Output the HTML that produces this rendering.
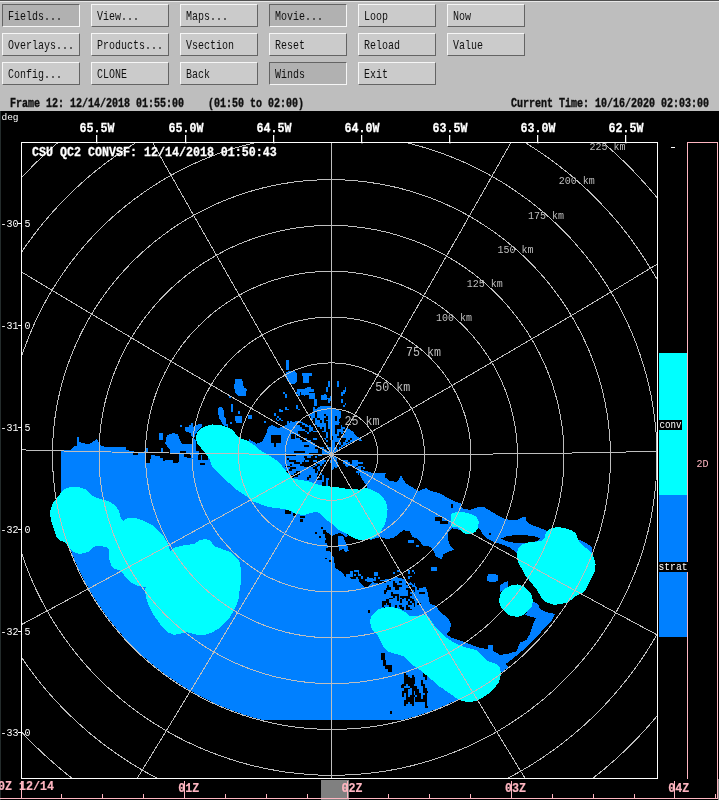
<!DOCTYPE html><html><head><meta charset="utf-8"><title>CIDD</title><style>
html,body{margin:0;padding:0;background:#000;}
body{width:719px;height:800px;overflow:hidden;position:relative;font-family:"Liberation Mono",monospace;}
#top{position:absolute;left:0;top:0;width:719px;height:111px;background:#bebebe;}
#top .l0{position:absolute;left:0;top:0;width:719px;height:1px;background:#505050;}
#top .l1{position:absolute;left:0;top:1px;width:719px;height:1px;background:#e8e8e8;}
.b{position:absolute;width:76px;height:21px;border:1px solid;border-color:#f6f6f6 #646464 #646464 #f6f6f6;background:#cbcbcb;}
.b.p{border-color:#646464 #f6f6f6 #f6f6f6 #646464;background:#b1b1b1;}
.b span{position:absolute;left:5px;top:1px;font-size:10px;line-height:21px;color:#101010;white-space:pre;transform:scaleY(1.36);transform-origin:0 50%;}
.st{position:absolute;top:96px;font-size:10px;font-weight:bold;line-height:16px;color:#101010;-webkit-text-stroke:0.3px #101010;white-space:pre;transform:scaleY(1.36);transform-origin:0 50%;}
svg{position:absolute;left:0;top:0;will-change:transform;}
#top{will-change:transform;}
</style></head><body>
<div id="top"><div class="l0"></div><div class="l1"></div>
<div class="b p" style="left:2px;top:4px"><span>Fields...</span></div>
<div class="b" style="left:2px;top:33px"><span>Overlays...</span></div>
<div class="b" style="left:2px;top:62px"><span>Config...</span></div>
<div class="b" style="left:91px;top:4px"><span>View...</span></div>
<div class="b" style="left:91px;top:33px"><span>Products...</span></div>
<div class="b" style="left:91px;top:62px"><span>CLONE</span></div>
<div class="b" style="left:180px;top:4px"><span>Maps...</span></div>
<div class="b" style="left:180px;top:33px"><span>Vsection</span></div>
<div class="b" style="left:180px;top:62px"><span>Back</span></div>
<div class="b p" style="left:269px;top:4px"><span>Movie...</span></div>
<div class="b" style="left:269px;top:33px"><span>Reset</span></div>
<div class="b p" style="left:269px;top:62px"><span>Winds</span></div>
<div class="b" style="left:358px;top:4px"><span>Loop</span></div>
<div class="b" style="left:358px;top:33px"><span>Reload</span></div>
<div class="b" style="left:358px;top:62px"><span>Exit</span></div>
<div class="b" style="left:447px;top:4px"><span>Now</span></div>
<div class="b" style="left:447px;top:33px"><span>Value</span></div>
<div class="st" style="left:10px">Frame 12: 12/14/2018 01:55:00    (01:50 to 02:00)</div>
<div class="st" style="left:511px">Current Time: 10/16/2020 02:03:00</div>
</div>
<svg width="719" height="800" viewBox="0 0 719 800">
<defs><clipPath id="cp"><rect x="22" y="143" width="635" height="635"/></clipPath></defs>
<rect x="0" y="111" width="1" height="689" fill="#232b2b"/>
<rect x="718" y="779" width="1" height="21" fill="#8a8a8a"/>
<g clip-path="url(#cp)" shape-rendering="crispEdges">
<polygon fill="#0080ff" points="60.5,450.0 71.0,450.0 73.4,446.7 76.7,445.6 77.4,437.4 79.0,437.4 79.6,442.3 84.5,443.4 87.9,444.5 92.3,442.3 96.8,439.0 98.4,442.3 101.2,445.6 106.8,447.2 118.0,447.2 125.7,446.7 125.7,450.0 133.5,451.2 133.5,454.5 138.0,453.4 144.7,451.2 146.9,462.3 150.2,462.3 150.9,454.5 155.8,455.6 161.4,456.7 164.7,460.0 173.6,459.0 179.2,462.3 179.2,453.4 184.8,452.3 193.7,453.4 250.0,453.0 331.5,454.5 324.0,518.0 324.0,530.0 326.0,540.0 329.0,550.0 334.0,558.0 335.0,568.0 342.0,572.0 346.0,578.0 355.0,579.0 360.0,582.0 366.0,589.0 372.0,582.0 380.0,584.0 386.0,579.0 396.0,577.0 404.0,579.0 410.0,581.0 414.0,586.0 420.0,588.0 426.0,587.0 428.0,594.0 430.0,604.0 436.0,606.0 440.0,612.0 448.0,618.0 451.0,624.0 450.0,630.0 446.0,634.0 452.0,638.0 464.0,642.0 472.0,645.0 480.0,648.0 488.0,649.0 488.0,645.0 493.0,645.0 493.0,650.0 496.0,654.0 500.0,660.0 508.6,667.0 504.8,670.0 500.9,672.9 497.0,675.8 493.0,678.6 489.0,681.4 484.9,684.1 480.8,686.7 476.6,689.2 472.4,691.7 468.1,694.1 463.8,696.4 459.5,698.6 455.1,700.8 450.6,702.9 446.2,704.9 441.7,706.8 437.1,708.7 432.6,710.4 428.0,712.1 423.3,713.8 418.7,715.3 414.0,716.7 409.3,718.1 404.5,719.4 399.7,720.0 395.0,720.0 390.2,720.0 385.3,720.0 380.5,720.0 375.6,720.0 370.8,720.0 365.9,720.0 361.0,720.0 356.1,720.0 351.2,720.0 346.2,720.0 341.3,720.0 336.4,720.0 331.5,720.0 326.5,720.0 321.6,720.0 316.7,720.0 311.8,720.0 306.8,720.0 301.9,720.0 297.0,720.0 292.2,720.0 287.3,720.0 282.4,720.0 277.6,720.0 272.8,720.0 268.0,720.0 263.2,720.0 258.4,719.0 253.7,717.7 248.9,716.2 244.3,714.8 239.6,713.2 235.0,711.6 230.4,709.8 225.8,708.0 221.2,706.1 216.7,704.2 212.3,702.1 207.9,700.0 203.5,697.8 199.1,695.6 194.8,693.2 190.5,690.8 186.3,688.3 182.2,685.8 178.0,683.1 173.9,680.4 169.9,677.7 165.9,674.8 162.0,671.9 158.1,668.9 154.3,665.9 150.6,662.8 146.9,659.6 143.2,656.4 139.6,653.1 136.1,649.7 132.6,646.3 129.2,642.8 125.9,639.3 122.6,635.7 119.4,632.1 116.3,628.4 113.2,624.6 110.2,620.8 107.3,616.9 104.4,613.0 101.6,609.1 98.9,605.1 96.2,601.0 93.7,597.0 91.1,592.8 88.7,588.6 86.4,584.4 84.1,580.2 81.9,575.9 79.8,571.5 77.7,567.2 75.8,562.8 73.9,558.4 72.1,553.9 70.3,549.4 68.7,544.9 67.1,540.3 65.6,535.8 64.2,531.2 62.9,526.5 61.7,521.9 60.5,517.2 60.5,512.6 60.5,507.9 60.5,503.1 60.5,498.4 60.5,493.7 60.5,488.9 60.5,484.2 60.5,479.4 60.5,474.6 60.5,469.9 60.5,465.1 60.5,460.3 60.5,455.5 60.5,450.7"/>
<polygon fill="#0080ff" points="358.3,468.3 361.0,469.5 374.5,473.4 385.7,473.4 384.6,477.0 390.0,481.0 397.0,482.0 401.0,475.6 405.7,483.4 413.5,488.0 419.0,491.0 425.8,488.0 430.0,490.8 436.7,492.5 441.7,494.2 448.3,498.3 453.3,500.8 460.8,503.3 461.7,508.3 470.0,510.0 475.0,508.3 480.0,506.7 484.0,506.7 486.7,509.0 493.3,512.5 498.3,515.8 503.3,518.3 510.0,520.0 516.7,520.0 521.7,517.5 525.3,516.7 526.7,521.7 531.7,525.0 540.0,528.0 545.0,530.0 550.0,535.0 530.0,560.0 517.0,553.0 510.0,547.6 502.0,544.4 495.0,542.0 493.3,541.7 488.3,539.2 483.3,535.0 478.7,527.5 470.0,533.0 460.0,530.0 452.5,528.3 448.3,531.7 447.5,538.3 450.0,545.0 454.2,550.0 448.3,551.7 443.3,554.2 441.7,559.2 435.8,556.7 433.3,550.0 430.0,546.7 423.3,545.8 418.0,539.0 412.4,537.0 410.0,531.3 403.5,530.2 399.0,533.5 393.5,538.0 386.8,539.0 381.0,537.0 370.0,540.0 366.7,486.0 363.3,481.0 360.0,475.0"/>
<polygon fill="#0080ff" points="530.0,600.0 538.0,604.0 540.0,609.0 546.0,612.0 555.0,614.0 552.0,620.0 542.7,630.0 535.0,638.8 527.7,646.3 520.0,652.6 512.6,658.9 502.6,666.4 496.0,660.0 492.0,650.0 500.0,655.0 507.6,653.9 516.4,651.4 520.0,642.6 526.4,640.0 530.0,633.8 532.7,625.0 536.0,618.0 528.0,616.0 525.0,615.0 531.0,606.0"/>
<polygon fill="#0080ff" points="248.7,438.9 256.5,443.7 262.3,441.8 266.2,434.0 268.1,427.2 272.0,425.2 277.9,428.1 283.7,426.2 291.5,422.3 299.3,420.4 303.8,423.1 307.5,425.0 310.0,428.1 312.5,432.5 315.0,436.3 317.5,440.0 321.3,445.0 325.0,448.8 330.0,452.5 330.0,451.9 327.5,447.5 325.0,441.3 323.8,436.3 320.0,432.5 317.5,427.5 315.0,423.8 315.0,418.1 310.0,416.3 313.0,412.0 316.2,408.8 320.0,406.2 327.5,406.2 330.0,408.0 337.5,410.0 341.2,411.2 341.2,417.5 338.5,420.0 342.5,426.9 347.5,428.1 352.5,431.2 356.2,435.6 360.4,438.8 362.2,441.5 357.5,440.0 350.0,443.1 343.8,446.2 337.5,450.0 333.0,454.2 335.0,460.0 250.0,460.0"/>
<polygon fill="#0080ff" points="167.6,435.1 173.4,433.1 177.6,434.2 180.1,440.1 181.8,445.1 180.9,449.2 176.8,450.1 170.1,450.1 167.6,446.7 165.4,443.4 165.9,438.4"/>
<polygon fill="#0080ff" points="185.0,427.5 188.8,427.1 189.2,425.4 190.9,425.0 191.3,423.4 193.0,423.4 193.0,426.7 195.0,426.7 195.0,425.0 197.5,424.6 201.7,424.2 201.7,426.7 199.2,429.2 196.7,432.5 195.0,435.0 194.2,438.4 195.9,440.1 195.9,445.9 197.5,445.9 201.7,449.2 203.4,453.4 192.5,453.4 192.5,436.7 191.3,435.9 190.9,433.4 189.2,432.5 186.7,432.1 185.0,430.9"/>
<polygon fill="#0080ff" points="170.0,433.8 177.5,434.2 179.2,438.4 180.9,443.4 192.5,444.2 192.5,451.7 187.1,451.7 187.1,450.9 182.5,450.9 182.5,451.7 170.0,451.7"/>
<polygon fill="#0080ff" points="170.0,451.7 182.5,451.7 182.5,450.9 187.1,450.9 187.1,451.7 192.5,451.7 192.5,453.4 170.0,453.4"/>
<polygon fill="#0080ff" points="217.6,411.3 220.1,410.0 224.3,410.0 224.3,413.3 223.4,415.0 223.4,417.9 225.9,418.3 225.9,424.2 227.6,424.2 227.6,426.7 222.6,425.0 221.8,420.0 219.2,418.3 219.2,413.3 217.6,412.5"/>
<polygon fill="#0080ff" points="286.6,371.7 291.5,370.7 296.4,371.7 297.4,381.4 293.5,384.3 288.6,382.4 285.7,377.5"/>
<polygon fill="#0080ff" points="235.0,379.5 241.9,378.5 243.8,387.3 246.7,389.2 245.8,396.0 238.9,396.0 235.0,392.1 234.1,387.3"/>
<polygon fill="#0080ff" points="218.5,407.7 222.4,406.7 223.4,414.5 225.3,418.4 224.3,424.3 221.4,422.3 219.5,416.5 217.5,412.6"/>
<polygon fill="#0080ff" points="332.0,456.0 337.0,457.0 338.0,466.0 334.0,470.0 332.0,470.0"/>
<polygon fill="#0080ff" points="320.0,510.0 324.0,516.0 332.0,524.0 340.0,530.0 348.0,535.0 346.0,537.0 340.0,532.4 332.0,536.0 324.0,530.0 324.0,522.0 320.0,518.0"/>
<polygon fill="#0080ff" points="338.2,536.3 343.2,536.3 345.0,541.3 347.5,546.3 348.8,551.3 345.0,551.9 343.2,548.8 339.4,550.7 338.2,546.3"/>
<polygon fill="#0080ff" points="577.1,539.1 580.1,540.1 586.1,543.1 592.2,547.1 592.2,552.5 588.2,552.5 584.1,549.1 580.1,545.1 577.7,542.1"/>
<polygon fill="#0080ff" points="488.0,574.5 495.0,573.7 498.4,576.1 497.6,581.1 492.0,582.5 487.6,581.1 487.0,577.1"/>
<polygon fill="#0080ff" points="500.0,585.1 505.0,582.1 508.0,581.1 508.0,586.1 504.0,590.1 500.0,592.1"/>
<polygon fill="#000" points="501.0,538.5 506.0,536.5 512.0,535.5 520.0,535.0 528.0,535.5 535.0,536.5 540.0,538.5 537.0,541.0 531.0,542.5 524.0,543.0 516.0,543.0 510.0,542.0 505.0,540.5"/>
<polygon fill="#000" points="334.5,466.7 343.4,475.6 354.5,481.2 366.7,485.6 366.7,489.4 352.3,487.8 338.9,486.7 332.2,485.6 331.1,473.4"/>
<path fill="#0080ff" d="M159.232,432.554h4.17362v7.51252h-4.17362zM180.1,425.042h2.00334v2.00334h-2.00334zM160.902,447.579h2.17028v4.67446h-2.17028zM145.876,447.579h1.66945v4.67446h-1.66945zM231.018,404.174h1.66945v7.51252h-1.66945zM235.192,415.86h1.66945v5.00835h-1.66945zM230.184,421.703h2.00334v2.50417h-2.00334zM302.22,372.656h9.7352v2.92056h-9.7352zM303.193,375.576h5.84112v7.78816h-5.84112zM285.67,360h2.92056v9.7352h-2.92056zM297.352,389.206h16.5498v2.92056h-16.5498zM301.246,392.126h7.78816v2.92056h-7.78816zM309.034,393.1h5.84112v5.84112h-5.84112zM313.902,398.941h2.92056v6.81464h-2.92056zM320.717,395.047h5.84112v4.8676h-5.84112zM229.206,396.02h1.94704v1.94704h-1.94704zM231.153,403.808h1.94704v7.78816h-1.94704zM236.02,416.464h5.84112v6.81464h-5.84112zM237.967,410.623h1.94704v2.92056h-1.94704zM247.702,414.517h3.89408v4.8676h-3.89408zM273.988,412.57h1.94704v3.89408h-1.94704zM264.252,421.332h1.94704v1.94704h-1.94704zM320.717,405.755h11.6822v2.92056h-11.6822zM316.822,408.676h7.78816v2.33645h-7.78816zM328,381h2v2h-2zM337,381h2v2h-2zM328,383h2v2h-2zM337,383h2v2h-2zM328,385h2v2h-2zM337,385h2v2h-2zM307,387h4v1h-4zM326,387h2v1h-2zM345,387h1v1h-1zM305,388h6v2h-6zM326,388h2v2h-2zM345,388h1v2h-1zM304,390h3v2h-3zM326,390h2v2h-2zM343,390h3v2h-3zM283,392h2v2h-2zM296,392h4v2h-4zM304,392h3v2h-3zM341,392h4v2h-4zM285,394h2v2h-2zM298,394h2v2h-2zM304,394h1v2h-1zM324,394h2v2h-2zM341,394h2v2h-2zM285,396h2v2h-2zM324,396h2v2h-2zM330,396h2v2h-2zM324,398h8v1h-8zM328,399h4v2h-4zM341,399h2v2h-2zM328,401h2v2h-2zM341,401h2v2h-2zM345,403h1v2h-1zM296,405h2v2h-2zM343,405h2v2h-2zM285,407h2v2h-2zM296,407h2v2h-2zM313,407h2v2h-2zM279,409h2v1h-2zM285,409h4v1h-4zM298,409h2v1h-2zM313,409h2v1h-2zM279,410h4v2h-4zM313,410h2v2h-2zM309,414h2v2h-2zM277,416h2v2h-2zM311,416h2v2h-2zM276,418h1v2h-1zM279,418h2v2h-2zM311,418h2v2h-2zM277,420h2v1h-2zM281,420h2v1h-2zM313,420h2v1h-2zM287,421h2v2h-2zM290,421h2v2h-2zM296,421h2v2h-2zM309,421h2v2h-2zM315,421h2v2h-2zM287,423h3v2h-3zM292,423h2v2h-2zM298,423h2v2h-2zM311,423h2v2h-2zM287,425h2v2h-2zM305,425h2v2h-2zM309,425h2v2h-2zM287,427h3v2h-3zM294,427h4v2h-4zM305,427h10v2h-10zM317,427h1v2h-1zM270,429h4v2h-4zM289,429h3v2h-3zM294,429h6v2h-6zM309,429h11v2h-11zM296,431h2v1h-2zM300,431h4v1h-4zM311,431h6v1h-6zM318,431h2v1h-2zM300,432h4v2h-4zM318,432h2v2h-2zM281,434h2v2h-2zM302,434h3v2h-3zM318,434h4v2h-4zM283,436h4v2h-4zM305,436h2v2h-2zM313,436h4v2h-4zM307,438h2v2h-2zM313,438h5v2h-5zM309,440h2v2h-2zM317,440h3v2h-3zM315,442h7v1h-7zM317,443h7v2h-7zM317,445h5v2h-5zM324,445h2v2h-2zM318,447h2v2h-2zM322,447h2v2h-2zM343,460h5v2h-5zM352,460h6v2h-6zM343,462h7v2h-7zM352,462h11v2h-11zM345,464h13v2h-13zM346,466h2v1h-2zM352,466h4v1h-4zM358,466h5v1h-5zM356,467h5v2h-5zM363,467h2v2h-2zM358,469h3v2h-3zM356,471h5v2h-5zM358,473h1v2h-1zM354,570h5v2h-5zM397,570h3v2h-3zM408,570h2v2h-2zM412,570h2v2h-2zM358,572h1v2h-1zM374,572h4v2h-4zM393,572h2v2h-2zM408,572h2v2h-2zM414,572h1v2h-1zM354,574h2v2h-2zM358,574h3v2h-3zM374,574h4v2h-4zM361,576h2v1h-2zM408,576h4v1h-4zM356,577h2v2h-2zM361,577h2v2h-2zM367,577h2v2h-2zM374,577h2v2h-2zM378,577h2v2h-2zM408,577h2v2h-2zM356,579h3v2h-3zM365,579h6v2h-6zM373,579h3v2h-3zM389,579h4v2h-4zM406,579h2v2h-2zM410,579h2v2h-2zM354,581h2v2h-2zM380,581h2v2h-2zM397,581h2v2h-2zM404,581h4v2h-4zM380,583h4v2h-4zM402,583h2v2h-2zM414,583h1v2h-1zM359,585h4v2h-4zM382,585h4v2h-4zM400,585h4v2h-4zM414,585h1v2h-1zM361,587h4v1h-4zM378,587h2v1h-2zM361,588h2v2h-2zM376,588h4v2h-4zM382,588h4v2h-4zM393,588h2v2h-2zM397,588h3v2h-3zM406,588h6v2h-6zM356,590h3v2h-3zM361,590h2v2h-2zM382,590h5v2h-5zM431.156,567.08h6.00841v4.00561h-6.00841zM408.123,540.042h6.00841v3.00421h-6.00841zM416.135,545.049h3.00421v2.0028h-3.00421zM350.042,571.086h3.00421v6.00841h-3.00421zM346.036,574.09h4.00561v5.00701h-4.00561zM367.066,578.095h6.00841v4.00561h-6.00841zM380.084,580.098h6.00841v4.00561h-6.00841zM448.763,602.699h2.003v2.50376h-2.003z"/>
<path fill="#000" d="M133.356,452.755h5.00835v2.33723h-5.00835zM145.042,453.422h2.00334v4.17362h-2.00334zM145.876,457.596h4.17362v5.84307h-4.17362zM153.389,453.422h2.50417v1.66945h-2.50417zM160.067,453.422h2.50417v4.17362h-2.50417zM162.571,455.927h2.50417v5.00835h-2.50417zM167.579,454.257h10.8514v5.84307h-10.8514zM173.422,460.1h5.00835v3.3389h-5.00835zM184.274,453.756h2.50417v2.17028h-2.50417zM186.778,455.092h4.17362v2.50417h-4.17362zM198.464,455.092h2.50417v5.00835h-2.50417zM202.638,453.422h5.84307v5.00835h-5.84307zM200.134,462.604h2.50417v2.50417h-2.50417zM203.472,463.439h1.66945v2.00334h-1.66945zM315,412h2v2h-2zM315,414h2v2h-2zM324,414h2v2h-2zM315,416h2v2h-2zM326,416h2v2h-2zM335,416h2v2h-2zM317,418h3v2h-3zM324,418h4v2h-4zM335,418h2v2h-2zM307,420h8v1h-8zM320,420h2v1h-2zM324,420h2v1h-2zM335,420h2v1h-2zM309,421h2v2h-2zM313,421h2v2h-2zM320,421h2v2h-2zM324,421h4v2h-4zM346,421h2v2h-2zM296,423h6v2h-6zM311,423h4v2h-4zM326,423h2v2h-2zM339,423h2v2h-2zM345,423h1v2h-1zM300,425h5v2h-5zM311,425h6v2h-6zM326,425h2v2h-2zM335,425h6v2h-6zM345,425h1v2h-1zM302,427h7v2h-7zM313,427h7v2h-7zM322,427h2v2h-2zM326,427h2v2h-2zM335,427h6v2h-6zM345,427h1v2h-1zM367,427h2v2h-2zM305,429h4v2h-4zM313,429h11v2h-11zM326,429h4v2h-4zM335,429h2v2h-2zM343,429h2v2h-2zM358,429h1v2h-1zM365,429h4v2h-4zM298,431h7v1h-7zM307,431h2v1h-2zM311,431h2v1h-2zM317,431h5v1h-5zM326,431h4v1h-4zM335,431h2v1h-2zM356,431h2v1h-2zM359,431h2v1h-2zM363,431h2v1h-2zM298,432h9v2h-9zM309,432h6v2h-6zM317,432h9v2h-9zM328,432h2v2h-2zM335,432h2v2h-2zM339,432h2v2h-2zM343,432h2v2h-2zM358,432h1v2h-1zM296,434h2v2h-2zM300,434h26v2h-26zM328,434h2v2h-2zM339,434h4v2h-4zM296,436h22v2h-22zM320,436h6v2h-6zM328,436h2v2h-2zM332,436h1v2h-1zM337,436h4v2h-4zM300,438h5v2h-5zM307,438h6v2h-6zM317,438h3v2h-3zM322,438h2v2h-2zM326,438h4v2h-4zM332,438h1v2h-1zM341,438h5v2h-5zM350,438h2v2h-2zM302,440h5v2h-5zM311,440h11v2h-11zM324,440h2v2h-2zM328,440h4v2h-4zM339,440h6v2h-6zM348,440h2v2h-2zM313,442h19v1h-19zM335,442h4v1h-4zM341,442h2v1h-2zM346,442h2v1h-2zM315,443h17v2h-17zM335,443h4v2h-4zM341,443h2v2h-2zM304,445h5v2h-5zM317,445h9v2h-9zM328,445h4v2h-4zM335,445h6v2h-6zM315,447h5v2h-5zM324,447h2v2h-2zM337,447h2v2h-2zM318,449h4v2h-4zM294,451h11v2h-11zM318,451h4v2h-4zM309,453h13v1h-13zM285,454h11v2h-11zM313,454h5v2h-5zM322,454h8v2h-8zM304,456h3v2h-3zM311,456h4v2h-4zM317,456h13v2h-13zM287,458h2v2h-2zM305,458h27v2h-27zM289,460h7v2h-7zM304,460h1v2h-1zM309,460h4v2h-4zM317,460h3v2h-3zM326,460h4v2h-4zM294,462h6v2h-6zM302,462h15v2h-15zM324,462h6v2h-6zM290,464h2v2h-2zM300,464h15v2h-15zM317,464h3v2h-3zM322,464h10v2h-10zM285,466h5v1h-5zM304,466h9v1h-9zM315,466h3v1h-3zM320,466h12v1h-12zM290,467h6v2h-6zM313,467h4v2h-4zM320,467h12v2h-12zM289,469h3v2h-3zM315,469h3v2h-3zM320,469h12v2h-12zM285,471h4v2h-4zM296,471h4v2h-4zM315,471h2v2h-2zM318,471h14v2h-14zM283,473h2v2h-2zM294,473h6v2h-6zM318,473h2v2h-2zM322,473h10v2h-10zM287,475h2v2h-2zM290,475h8v2h-8zM309,475h2v2h-2zM317,475h5v2h-5zM324,475h8v2h-8zM283,477h11v1h-11zM307,477h4v1h-4zM317,477h1v1h-1zM320,477h2v1h-2zM324,477h8v1h-8zM281,478h2v2h-2zM307,478h2v2h-2zM317,478h5v2h-5zM324,478h2v2h-2zM324,480h2v2h-2zM322,482h4v2h-4zM322,484h4v2h-4zM330,484h2v2h-2zM322,486h2v2h-2zM330,486h2v2h-2zM322,488h2v1h-2zM330,488h2v1h-2zM389,577h4v2h-4zM389,579h2v2h-2zM406,579h6v2h-6zM380,581h6v2h-6zM393,581h2v2h-2zM399,581h3v2h-3zM406,581h4v2h-4zM393,583h4v2h-4zM387,585h2v2h-2zM395,585h7v2h-7zM408,585h4v2h-4zM387,587h2v1h-2zM395,587h2v1h-2zM410,587h5v1h-5zM417,587h2v1h-2zM386,588h3v2h-3zM395,588h2v2h-2zM410,588h2v2h-2zM417,588h2v2h-2zM384,590h3v2h-3zM408,590h4v2h-4zM384,592h2v2h-2zM408,592h2v2h-2zM419,592h6v2h-6zM393,594h2v2h-2zM408,594h4v2h-4zM393,596h2v2h-2zM404,596h6v2h-6zM389,598h4v1h-4zM406,598h6v1h-6zM386,599h3v2h-3zM400,599h2v2h-2zM406,599h2v2h-2zM410,599h4v2h-4zM382,601h7v2h-7zM400,601h2v2h-2zM412,601h3v2h-3zM382,603h2v2h-2zM387,603h4v2h-4zM414,603h1v2h-1zM417,603h4v2h-4zM382,605h2v2h-2zM389,605h2v2h-2zM395,605h2v2h-2zM414,605h1v2h-1zM384,607h7v2h-7zM395,607h2v2h-2zM402,607h2v2h-2zM406,607h4v2h-4zM387,609h4v1h-4zM395,609h5v1h-5zM402,609h2v1h-2zM406,609h6v1h-6zM387,610h2v2h-2zM399,610h1v2h-1zM387,612h2v2h-2zM399,612h1v2h-1zM368.067,610.14h2.0028v2.40336h-2.0028zM448.179,602.129h2.40336v2.40336h-2.40336zM435.161,517.01h7.00981v4.00561h-7.00981zM440.168,521.015h8.01122v3.00421h-8.01122zM321.264,526.909h1.87735v1.87735h-1.87735zM315.006,531.915h1.87735v1.87735h-1.87735zM319.387,535.67h1.87735v1.87735h-1.87735zM323.141,530.038h2.50313v3.75469h-2.50313zM325.645,536.295h2.50313v1.87735h-2.50313zM325.019,540.05h1.87735v2.50313h-1.87735zM326.27,548.185h3.12891v2.50313h-3.12891zM325.019,557.572h1.87735v1.87735h-1.87735zM328.773,560.075h1.87735v1.87735h-1.87735zM381.029,653.102h4.00561v7.00981h-4.00561zM383.032,660.112h3.00421v6.00841h-3.00421zM385.035,665.119h7.00981v4.00561h-7.00981zM388.039,669.125h4.00561v3.00421h-4.00561zM368.011,611.043h2.0028v2.0028h-2.0028zM390.042,711.184h2.0028v2.60365h-2.0028zM401.057,685.147h2.0028v3.00421h-2.0028zM404,673h2v2h-2zM423,673h2v2h-2zM404,675h4v2h-4zM412,675h2v2h-2zM423,675h4v2h-4zM404,677h6v1h-6zM412,677h3v1h-3zM425,677h2v1h-2zM404,678h11v2h-11zM425,678h2v2h-2zM404,680h11v2h-11zM421,680h2v2h-2zM404,682h11v2h-11zM421,682h2v2h-2zM402,684h4v2h-4zM408,684h6v2h-6zM421,684h4v2h-4zM402,686h2v2h-2zM410,686h7v2h-7zM423,686h2v2h-2zM404,688h6v1h-6zM412,688h5v1h-5zM423,688h4v1h-4zM404,689h4v2h-4zM412,689h7v2h-7zM423,689h4v2h-4zM402,691h6v2h-6zM412,691h2v2h-2zM415,691h4v2h-4zM423,691h5v2h-5zM402,693h2v2h-2zM406,693h2v2h-2zM412,693h2v2h-2zM415,693h6v2h-6zM425,693h2v2h-2zM402,695h2v2h-2zM406,695h2v2h-2zM410,695h5v2h-5zM417,695h4v2h-4zM423,695h4v2h-4zM406,697h8v2h-8zM415,697h6v2h-6zM423,697h4v2h-4zM406,699h8v1h-8zM415,699h12v1h-12zM404,700h10v2h-10zM415,700h12v2h-12zM404,702h4v2h-4zM410,702h4v2h-4zM425,702h2v2h-2zM404,704h2v2h-2zM412,704h2v2h-2zM425,704h2v2h-2zM425,706h3v2h-3zM393,581h2v2h-2zM406,581h2v2h-2zM393,583h2v2h-2zM406,583h2v2h-2zM393,585h9v2h-9zM389,587h2v1h-2zM395,587h4v1h-4zM389,588h2v2h-2zM397,588h2v2h-2zM406,588h9v2h-9zM410,590h2v2h-2zM414,590h1v2h-1zM391,592h2v2h-2zM391,594h8v2h-8zM397,596h2v2h-2zM400,596h4v2h-4zM389,598h4v1h-4zM397,598h2v1h-2zM402,598h2v1h-2zM397,599h2v2h-2zM384,601h3v2h-3zM408,601h2v2h-2zM384,603h2v2h-2zM408,603h4v2h-4zM399,605h3v2h-3zM406,605h2v2h-2zM400,607h2v2h-2zM406,607h4v2h-4zM450.885,504.207h2.00334v3.3389h-2.00334zM488.781,532.588h2.67112v2.50417h-2.67112zM196.022,446.064h6.00841v5.00701h-6.00841zM199.027,451.072h6.00841v4.00561h-6.00841zM202.031,455.077h6.00841v5.00701h-6.00841zM285.147,509.754h6.00841v4.00561h-6.00841zM293.158,512.157h3.00421v4.00561h-3.00421zM300.168,516.163h5.00701v2.0028h-5.00701zM300.168,519.167h2.40336v3.00421h-2.40336zM271.128,435.049h10.014v8.01122h-10.014zM274.132,443.06h2.0028v4.00561h-2.0028zM291.156,434.048h4.00561v5.00701h-4.00561zM180,451.072h6.00841v3.00421h-6.00841zM184.006,454.076h6.00841v3.00421h-6.00841z"/>
<polygon fill="#00ffff" points="64.0,489.0 70.0,487.0 79.0,487.0 87.0,490.0 92.4,496.0 100.0,499.0 108.0,501.0 115.0,505.0 119.0,511.0 121.0,519.0 123.0,521.0 128.0,518.0 136.0,518.0 144.0,521.0 152.0,525.0 158.0,531.0 164.0,537.0 168.0,544.0 170.0,551.0 173.0,548.0 182.0,545.6 194.0,544.0 200.0,540.0 205.0,539.0 211.0,541.0 214.0,546.0 222.0,549.0 230.0,552.0 236.0,557.0 239.6,562.0 241.0,570.0 241.0,582.0 239.6,590.0 239.0,598.0 237.0,604.0 234.0,610.0 230.0,617.0 224.0,623.0 218.0,629.0 211.0,633.0 204.0,635.0 198.0,635.0 190.0,633.0 186.0,632.0 181.0,633.6 174.0,635.0 168.0,632.4 163.0,628.0 158.0,621.0 153.0,614.0 149.0,606.0 146.0,598.0 145.0,590.0 146.0,587.0 138.0,586.0 130.0,582.0 124.0,575.0 120.0,570.0 114.0,569.0 111.0,565.0 109.0,558.0 109.0,550.0 106.0,547.0 98.0,545.6 93.0,547.0 88.0,552.0 80.0,554.0 73.0,552.0 70.0,549.0 65.0,542.0 60.0,541.0 57.0,538.0 55.0,532.0 52.0,524.0 50.4,517.0 50.4,510.0 52.4,504.0 56.0,499.0 60.0,494.0"/>
<polygon fill="#00ffff" points="200.0,429.0 206.0,426.0 212.0,424.4 220.0,425.0 227.0,427.0 233.0,430.0 237.0,436.0 242.0,439.0 248.0,441.0 254.0,445.0 259.0,449.6 264.0,452.4 270.0,456.0 276.0,460.0 282.0,466.0 286.0,471.0 290.0,476.0 295.0,479.0 300.0,480.0 308.0,481.0 316.0,484.0 324.0,486.0 336.0,487.0 348.0,489.0 360.0,489.6 366.0,488.0 372.0,490.0 378.0,493.0 383.0,497.0 386.0,502.0 387.6,509.0 387.0,516.0 385.0,524.0 381.0,531.0 377.0,536.0 371.0,539.0 364.0,540.4 358.0,539.6 352.0,537.0 347.0,534.0 341.0,531.0 336.0,528.0 332.0,524.0 328.0,521.0 324.0,518.0 320.0,513.0 316.0,512.0 310.0,513.0 304.0,515.0 296.0,514.0 291.0,511.0 284.0,509.0 276.0,508.0 268.0,507.0 260.0,504.0 252.0,501.0 246.0,496.0 240.0,492.0 234.0,488.0 229.0,483.0 223.0,478.0 217.0,472.0 212.0,466.0 210.0,460.0 206.0,454.0 201.0,448.0 197.0,443.0 195.6,438.0 197.0,433.0"/>
<polygon fill="#00ffff" points="372.0,615.0 377.0,610.0 384.0,607.6 392.0,607.0 400.0,609.0 405.0,612.0 409.0,616.0 418.0,615.6 426.0,615.0 430.0,619.0 434.0,625.0 439.0,631.0 444.0,636.0 450.0,640.0 456.0,643.6 464.0,647.0 472.0,649.0 478.0,651.0 482.0,656.0 488.0,661.0 496.0,664.0 500.0,668.0 501.0,674.0 499.0,682.0 494.0,689.0 488.0,694.0 482.0,698.0 476.0,701.0 469.0,702.4 462.0,701.0 456.0,698.0 452.0,695.0 446.0,691.0 442.0,688.0 437.0,685.0 432.0,680.0 426.0,675.0 420.0,670.0 414.0,666.0 409.0,662.0 405.0,657.0 400.0,655.0 395.0,654.0 389.0,652.0 384.0,648.0 381.0,642.0 378.0,636.0 374.0,632.0 371.0,627.0 370.0,621.0"/>
<polygon fill="#00ffff" points="451.7,513.3 458.3,511.7 465.0,512.5 471.7,514.2 476.7,516.7 478.7,521.7 478.3,527.5 475.8,531.7 470.8,534.2 465.0,533.7 460.8,530.8 458.3,527.5 452.5,526.7 450.8,521.7 450.8,516.7"/>
<polygon fill="#00ffff" points="546.0,532.0 550.0,529.0 557.0,527.0 564.0,528.0 571.0,530.0 576.0,533.0 578.0,539.0 580.0,543.0 586.0,548.0 591.0,552.0 594.0,558.0 595.6,564.0 595.0,571.0 592.0,577.0 589.0,583.0 586.0,589.0 582.0,593.0 576.0,596.0 571.0,600.0 566.0,603.0 560.0,604.0 554.0,605.0 548.0,603.0 543.0,600.0 540.0,595.0 537.0,590.0 533.0,585.0 529.0,580.0 525.0,575.0 522.0,569.0 519.0,564.0 517.0,558.0 517.0,552.0 519.0,547.0 523.0,544.0 529.0,542.0 536.0,541.6 542.0,541.0 545.0,537.0"/>
<polygon fill="#00ffff" points="510.0,585.6 518.0,584.4 523.0,586.0 528.0,590.0 531.6,595.0 533.0,601.0 531.6,607.0 528.0,611.0 523.0,615.0 517.0,617.0 510.0,615.6 505.0,612.0 501.0,607.0 499.0,601.0 500.0,595.0 503.0,590.0"/>
</g>
<g clip-path="url(#cp)" fill="none" stroke="#bebebe" stroke-width="1" shape-rendering="crispEdges">
<path d="M331.5,408.7 L333.1,408.8 L334.7,408.9 L336.3,409.0 L337.9,409.2 L339.5,409.4 L341.1,409.8 L342.7,410.1 L344.2,410.5 L345.8,411.0 L347.3,411.5 L348.8,412.1 L350.3,412.7 L351.8,413.4 L353.2,414.1 L354.7,414.9 L356.1,415.7 L357.4,416.6 L358.7,417.5 L360.0,418.5 L361.3,419.5 L362.5,420.6 L363.7,421.6 L364.9,422.8 L366.0,423.9 L367.0,425.2 L368.0,426.4 L369.0,427.7 L370.0,429.0 L370.8,430.3 L371.7,431.7 L372.5,433.1 L373.2,434.5 L373.9,436.0 L374.5,437.4 L375.1,438.9 L375.7,440.4 L376.1,442.0 L376.6,443.5 L376.9,445.1 L377.2,446.6 L377.5,448.2 L377.7,449.8 L377.8,451.4 L377.9,453.0 L378.0,454.6 L377.9,456.2 L377.9,457.8 L377.7,459.4 L377.5,461.0 L377.3,462.6 L377.0,464.1 L376.6,465.7 L376.2,467.2 L375.7,468.8 L375.2,470.3 L374.6,471.8 L374.0,473.2 L373.3,474.7 L372.6,476.1 L371.8,477.5 L370.9,478.9 L370.1,480.2 L369.1,481.5 L368.2,482.8 L367.1,484.1 L366.1,485.3 L365.0,486.4 L363.8,487.6 L362.6,488.7 L361.4,489.7 L360.1,490.7 L358.8,491.7 L357.5,492.6 L356.2,493.5 L354.8,494.3 L353.3,495.1 L351.9,495.8 L350.4,496.5 L348.9,497.1 L347.4,497.6 L345.9,498.2 L344.3,498.6 L342.7,499.0 L341.2,499.4 L339.6,499.7 L337.9,499.9 L336.3,500.1 L334.7,500.3 L333.1,500.3 L331.5,500.4 L329.8,500.3 L328.2,500.2 L326.6,500.1 L325.0,499.9 L323.4,499.6 L321.8,499.3 L320.2,499.0 L318.6,498.6 L317.1,498.1 L315.5,497.5 L314.0,497.0 L312.5,496.3 L311.0,495.7 L309.6,494.9 L308.2,494.1 L306.8,493.3 L305.4,492.4 L304.1,491.5 L302.8,490.5 L301.5,489.5 L300.3,488.5 L299.1,487.4 L298.0,486.2 L296.8,485.1 L295.8,483.8 L294.8,482.6 L293.8,481.3 L292.9,480.0 L292.0,478.7 L291.1,477.3 L290.4,475.9 L289.6,474.4 L288.9,473.0 L288.3,471.5 L287.7,470.0 L287.2,468.5 L286.7,467.0 L286.3,465.4 L286.0,463.9 L285.6,462.3 L285.4,460.7 L285.2,459.1 L285.1,457.5 L285.0,455.9 L285.0,454.3 L285.0,452.7 L285.1,451.1 L285.2,449.5 L285.4,448.0 L285.7,446.4 L286.0,444.8 L286.4,443.3 L286.8,441.7 L287.3,440.2 L287.8,438.7 L288.4,437.2 L289.0,435.7 L289.7,434.3 L290.4,432.9 L291.2,431.5 L292.1,430.1 L293.0,428.8 L293.9,427.5 L294.9,426.2 L295.9,424.9 L297.0,423.7 L298.1,422.6 L299.2,421.5 L300.4,420.4 L301.6,419.3 L302.9,418.3 L304.2,417.4 L305.5,416.5 L306.9,415.6 L308.3,414.8 L309.7,414.0 L311.1,413.3 L312.6,412.6 L314.1,412.0 L315.6,411.4 L317.1,410.9 L318.7,410.5 L320.2,410.1 L321.8,409.7 L323.4,409.4 L325.0,409.2 L326.6,409.0 L328.2,408.8 L329.8,408.8Z"/>
<path d="M331.5,362.9 L334.7,363.0 L337.9,363.1 L341.1,363.4 L344.3,363.8 L347.5,364.3 L350.7,365.0 L353.9,365.7 L357.0,366.5 L360.1,367.4 L363.1,368.5 L366.1,369.6 L369.1,370.9 L372.1,372.2 L374.9,373.7 L377.8,375.2 L380.5,376.9 L383.3,378.6 L385.9,380.5 L388.5,382.4 L391.0,384.4 L393.5,386.5 L395.8,388.7 L398.1,390.9 L400.4,393.3 L402.5,395.7 L404.5,398.1 L406.5,400.7 L408.4,403.3 L410.1,406.0 L411.8,408.7 L413.4,411.5 L414.9,414.4 L416.3,417.3 L417.5,420.2 L418.7,423.2 L419.8,426.2 L420.7,429.3 L421.6,432.3 L422.3,435.5 L423.0,438.6 L423.5,441.7 L423.9,444.9 L424.2,448.1 L424.4,451.3 L424.5,454.5 L424.4,457.7 L424.3,460.9 L424.0,464.1 L423.6,467.3 L423.1,470.4 L422.5,473.6 L421.8,476.7 L421.0,479.8 L420.0,482.8 L419.0,485.9 L417.8,488.9 L416.6,491.8 L415.2,494.7 L413.8,497.6 L412.2,500.4 L410.5,503.1 L408.8,505.8 L406.9,508.4 L405.0,511.0 L402.9,513.5 L400.8,515.9 L398.6,518.2 L396.3,520.5 L393.9,522.7 L391.5,524.8 L388.9,526.8 L386.3,528.7 L383.7,530.6 L380.9,532.3 L378.2,534.0 L375.3,535.5 L372.4,537.0 L369.5,538.3 L366.5,539.6 L363.4,540.7 L360.3,541.8 L357.2,542.7 L354.1,543.5 L350.9,544.2 L347.7,544.8 L344.5,545.3 L341.2,545.7 L338.0,546.0 L334.7,546.1 L331.5,546.2 L328.2,546.1 L324.9,545.9 L321.7,545.7 L318.5,545.3 L315.2,544.7 L312.0,544.1 L308.9,543.4 L305.7,542.5 L302.6,541.6 L299.5,540.5 L296.5,539.4 L293.5,538.1 L290.5,536.7 L287.6,535.3 L284.8,533.7 L282.0,532.0 L279.2,530.3 L276.6,528.4 L274.0,526.5 L271.5,524.4 L269.0,522.3 L266.6,520.1 L264.3,517.8 L262.1,515.5 L260.0,513.0 L258.0,510.5 L256.0,508.0 L254.1,505.3 L252.4,502.6 L250.7,499.9 L249.2,497.1 L247.7,494.2 L246.3,491.3 L245.1,488.3 L243.9,485.3 L242.9,482.3 L241.9,479.2 L241.1,476.1 L240.4,473.0 L239.8,469.9 L239.3,466.7 L238.9,463.5 L238.7,460.3 L238.5,457.1 L238.5,453.9 L238.5,450.7 L238.7,447.5 L239.0,444.4 L239.4,441.2 L239.9,438.0 L240.6,434.9 L241.3,431.8 L242.2,428.7 L243.1,425.7 L244.2,422.7 L245.4,419.7 L246.7,416.7 L248.0,413.9 L249.5,411.0 L251.1,408.2 L252.8,405.5 L254.6,402.8 L256.4,400.2 L258.4,397.7 L260.4,395.2 L262.6,392.8 L264.8,390.5 L267.1,388.3 L269.4,386.1 L271.9,384.0 L274.4,382.0 L277.0,380.1 L279.7,378.3 L282.4,376.6 L285.2,375.0 L288.0,373.4 L290.9,372.0 L293.8,370.7 L296.8,369.4 L299.8,368.3 L302.9,367.3 L305.9,366.4 L309.1,365.5 L312.2,364.8 L315.4,364.2 L318.6,363.8 L321.8,363.4 L325.0,363.1 L328.2,363.0Z"/>
<path d="M331.5,317.1 L336.3,317.2 L341.1,317.4 L345.9,317.9 L350.7,318.5 L355.5,319.2 L360.3,320.1 L365.0,321.2 L369.6,322.5 L374.3,323.9 L378.9,325.4 L383.4,327.1 L387.8,329.0 L392.2,331.0 L396.5,333.2 L400.8,335.5 L404.9,338.0 L409.0,340.6 L413.0,343.3 L416.9,346.2 L420.6,349.2 L424.3,352.3 L427.9,355.6 L431.3,359.0 L434.6,362.5 L437.8,366.1 L440.9,369.8 L443.8,373.6 L446.6,377.5 L449.3,381.5 L451.8,385.6 L454.2,389.8 L456.4,394.1 L458.5,398.4 L460.5,402.8 L462.2,407.3 L463.8,411.8 L465.3,416.4 L466.6,421.0 L467.7,425.7 L468.7,430.4 L469.5,435.1 L470.1,439.9 L470.6,444.6 L470.8,449.4 L471.0,454.2 L470.9,459.0 L470.7,463.8 L470.3,468.6 L469.7,473.4 L469.0,478.1 L468.1,482.8 L467.1,487.5 L465.8,492.1 L464.4,496.7 L462.9,501.3 L461.2,505.8 L459.3,510.2 L457.2,514.6 L455.1,518.9 L452.7,523.1 L450.2,527.2 L447.6,531.2 L444.8,535.2 L441.9,539.0 L438.8,542.8 L435.6,546.4 L432.3,549.9 L428.9,553.4 L425.3,556.6 L421.6,559.8 L417.8,562.8 L413.9,565.7 L409.9,568.5 L405.8,571.1 L401.7,573.6 L397.4,576.0 L393.0,578.1 L388.6,580.2 L384.1,582.1 L379.5,583.8 L374.9,585.3 L370.2,586.7 L365.4,588.0 L360.7,589.1 L355.9,590.0 L351.0,590.7 L346.1,591.3 L341.3,591.7 L336.4,591.9 L331.5,592.0 L326.6,591.9 L321.7,591.6 L316.8,591.2 L311.9,590.6 L307.1,589.8 L302.2,588.9 L297.5,587.8 L292.7,586.5 L288.0,585.1 L283.4,583.5 L278.8,581.7 L274.3,579.8 L269.9,577.8 L265.5,575.6 L261.3,573.2 L257.1,570.7 L253.0,568.0 L249.0,565.2 L245.1,562.3 L241.3,559.3 L237.6,556.1 L234.0,552.8 L230.6,549.3 L227.3,545.8 L224.1,542.1 L221.0,538.4 L218.1,534.5 L215.3,530.5 L212.7,526.5 L210.2,522.3 L207.9,518.1 L205.7,513.8 L203.6,509.4 L201.8,505.0 L200.0,500.5 L198.5,495.9 L197.1,491.3 L195.9,486.7 L194.8,482.0 L193.9,477.3 L193.2,472.5 L192.6,467.8 L192.2,463.0 L192.0,458.2 L192.0,453.4 L192.1,448.6 L192.4,443.8 L192.8,439.0 L193.5,434.3 L194.2,429.5 L195.2,424.8 L196.3,420.2 L197.6,415.6 L199.1,411.0 L200.7,406.5 L202.5,402.0 L204.4,397.6 L206.5,393.3 L208.7,389.1 L211.1,384.9 L213.6,380.8 L216.3,376.8 L219.1,372.9 L222.0,369.1 L225.1,365.4 L228.3,361.8 L231.6,358.4 L235.1,355.0 L238.6,351.8 L242.3,348.7 L246.1,345.7 L249.9,342.8 L253.9,340.1 L258.0,337.5 L262.1,335.1 L266.4,332.8 L270.7,330.7 L275.1,328.7 L279.5,326.8 L284.1,325.1 L288.6,323.6 L293.3,322.2 L297.9,321.0 L302.7,320.0 L307.4,319.1 L312.2,318.4 L317.0,317.8 L321.8,317.4 L326.6,317.2Z"/>
<path d="M331.5,271.3 L337.9,271.4 L344.3,271.7 L350.7,272.3 L357.1,273.1 L363.5,274.1 L369.8,275.3 L376.0,276.8 L382.3,278.4 L388.4,280.3 L394.5,282.4 L400.5,284.6 L406.5,287.1 L412.3,289.8 L418.1,292.7 L423.7,295.8 L429.2,299.0 L434.7,302.5 L439.9,306.1 L445.1,310.0 L450.1,314.0 L455.0,318.1 L459.8,322.5 L464.4,326.9 L468.8,331.6 L473.1,336.4 L477.2,341.3 L481.1,346.4 L484.8,351.6 L488.4,356.9 L491.8,362.4 L495.0,368.0 L497.9,373.6 L500.7,379.4 L503.3,385.3 L505.7,391.2 L507.8,397.2 L509.8,403.3 L511.5,409.5 L513.0,415.7 L514.3,422.0 L515.4,428.3 L516.3,434.6 L516.9,441.0 L517.3,447.4 L517.5,453.8 L517.4,460.2 L517.1,466.6 L516.6,472.9 L515.9,479.3 L514.9,485.6 L513.8,491.9 L512.4,498.2 L510.7,504.4 L508.9,510.5 L506.8,516.6 L504.5,522.6 L502.1,528.5 L499.4,534.3 L496.4,540.0 L493.3,545.7 L490.0,551.2 L486.5,556.6 L482.8,561.9 L478.9,567.0 L474.8,572.0 L470.6,576.9 L466.2,581.6 L461.6,586.1 L456.8,590.5 L451.9,594.8 L446.9,598.8 L441.7,602.7 L436.3,606.4 L430.8,609.9 L425.3,613.2 L419.5,616.3 L413.7,619.3 L407.8,622.0 L401.8,624.5 L395.7,626.8 L389.5,628.9 L383.2,630.8 L376.9,632.4 L370.5,633.9 L364.1,635.1 L357.6,636.1 L351.1,636.9 L344.6,637.4 L338.0,637.7 L331.5,637.8 L324.9,637.7 L318.4,637.3 L311.8,636.8 L305.3,635.9 L298.8,634.9 L292.4,633.7 L286.0,632.2 L279.7,630.5 L273.4,628.6 L267.3,626.4 L261.1,624.1 L255.1,621.5 L249.2,618.8 L243.4,615.8 L237.7,612.7 L232.1,609.3 L226.6,605.8 L221.3,602.0 L216.1,598.1 L211.0,594.0 L206.1,589.8 L201.3,585.3 L196.7,580.8 L192.3,576.0 L188.1,571.1 L184.0,566.1 L180.1,560.9 L176.4,555.6 L172.9,550.2 L169.6,544.7 L166.5,539.0 L163.6,533.3 L160.9,527.5 L158.4,521.5 L156.1,515.5 L154.0,509.4 L152.2,503.3 L150.6,497.1 L149.2,490.8 L148.0,484.5 L147.0,478.2 L146.3,471.8 L145.8,465.4 L145.5,459.1 L145.5,452.7 L145.6,446.3 L146.0,439.9 L146.7,433.5 L147.5,427.2 L148.6,420.9 L149.9,414.6 L151.4,408.4 L153.1,402.3 L155.1,396.2 L157.2,390.2 L159.6,384.2 L162.2,378.4 L165.0,372.6 L168.0,367.0 L171.1,361.4 L174.5,356.0 L178.1,350.7 L181.8,345.5 L185.7,340.5 L189.8,335.5 L194.1,330.8 L198.5,326.2 L203.1,321.7 L207.9,317.4 L212.8,313.2 L217.8,309.3 L223.0,305.5 L228.3,301.9 L233.7,298.5 L239.2,295.2 L244.9,292.2 L250.6,289.3 L256.5,286.7 L262.4,284.2 L268.4,282.0 L274.5,279.9 L280.7,278.1 L286.9,276.5 L293.1,275.1 L299.5,273.9 L305.8,272.9 L312.2,272.2 L318.6,271.7 L325.0,271.4Z"/>
<path d="M331.5,225.4 L339.5,225.6 L347.5,226.0 L355.5,226.8 L363.4,227.7 L371.4,229.0 L379.2,230.5 L387.1,232.3 L394.8,234.4 L402.5,236.7 L410.1,239.3 L417.6,242.1 L425.0,245.2 L432.3,248.5 L439.5,252.1 L446.5,256.0 L453.4,260.1 L460.2,264.4 L466.8,268.9 L473.3,273.7 L479.6,278.6 L485.7,283.8 L491.6,289.2 L497.3,294.8 L502.9,300.6 L508.2,306.6 L513.3,312.8 L518.2,319.1 L522.9,325.6 L527.4,332.2 L531.6,339.1 L535.6,346.0 L539.3,353.1 L542.8,360.3 L546.1,367.6 L549.0,375.0 L551.8,382.5 L554.2,390.2 L556.4,397.8 L558.3,405.6 L559.9,413.4 L561.3,421.3 L562.4,429.2 L563.2,437.2 L563.7,445.2 L564.0,453.2 L563.9,461.2 L563.6,469.1 L563.0,477.1 L562.1,485.1 L560.9,493.0 L559.5,500.9 L557.7,508.7 L555.7,516.4 L553.4,524.1 L550.8,531.7 L548.0,539.2 L544.9,546.6 L541.5,553.9 L537.9,561.1 L534.0,568.1 L529.9,575.0 L525.5,581.8 L520.9,588.4 L516.1,594.8 L511.0,601.1 L505.7,607.2 L500.1,613.1 L494.4,618.8 L488.5,624.3 L482.3,629.6 L476.0,634.7 L469.5,639.6 L462.8,644.2 L456.0,648.6 L449.0,652.8 L441.8,656.7 L434.5,660.4 L427.1,663.8 L419.6,666.9 L411.9,669.8 L404.2,672.5 L396.3,674.8 L388.4,676.9 L380.4,678.7 L372.3,680.2 L364.2,681.5 L356.1,682.4 L347.9,683.1 L339.7,683.5 L331.5,683.7 L323.2,683.5 L315.0,683.0 L306.9,682.3 L298.7,681.3 L290.6,680.0 L282.5,678.4 L274.5,676.6 L266.6,674.4 L258.8,672.0 L251.0,669.3 L243.4,666.4 L235.8,663.2 L228.4,659.7 L221.1,656.0 L214.0,652.1 L207.0,647.9 L200.1,643.4 L193.4,638.7 L186.9,633.8 L180.6,628.7 L174.5,623.4 L168.5,617.8 L162.8,612.1 L157.3,606.2 L151.9,600.0 L146.9,593.7 L142.0,587.3 L137.4,580.6 L133.0,573.8 L128.9,566.9 L125.0,559.8 L121.4,552.6 L118.0,545.3 L114.9,537.9 L112.1,530.4 L109.5,522.8 L107.2,515.1 L105.2,507.3 L103.5,499.5 L102.0,491.6 L100.8,483.7 L99.9,475.7 L99.3,467.8 L99.0,459.8 L99.0,451.8 L99.2,443.8 L99.7,435.8 L100.5,427.8 L101.6,419.9 L103.0,412.1 L104.6,404.2 L106.5,396.5 L108.7,388.8 L111.2,381.2 L113.9,373.7 L116.9,366.3 L120.1,359.0 L123.6,351.8 L127.3,344.8 L131.3,337.9 L135.5,331.1 L140.0,324.4 L144.7,318.0 L149.6,311.7 L154.7,305.5 L160.1,299.6 L165.6,293.8 L171.3,288.3 L177.3,282.9 L183.4,277.8 L189.7,272.8 L196.1,268.1 L202.7,263.6 L209.5,259.3 L216.4,255.3 L223.4,251.5 L230.6,247.9 L237.9,244.6 L245.3,241.6 L252.8,238.8 L260.4,236.3 L268.1,234.0 L275.9,232.0 L283.7,230.2 L291.6,228.7 L299.5,227.5 L307.4,226.6 L315.4,225.9 L323.4,225.6Z"/>
<path d="M331.5,179.6 L341.1,179.8 L350.6,180.3 L360.2,181.2 L369.7,182.4 L379.2,183.9 L388.7,185.7 L398.0,187.8 L407.3,190.3 L416.5,193.1 L425.6,196.1 L434.6,199.5 L443.5,203.2 L452.2,207.2 L460.8,211.5 L469.3,216.1 L477.5,221.0 L485.6,226.2 L493.6,231.6 L501.3,237.3 L508.8,243.3 L516.2,249.5 L523.3,255.9 L530.2,262.6 L536.8,269.6 L543.2,276.7 L549.4,284.1 L555.3,291.7 L560.9,299.5 L566.3,307.4 L571.4,315.6 L576.1,323.9 L580.6,332.4 L584.8,341.0 L588.7,349.8 L592.3,358.7 L595.6,367.7 L598.6,376.8 L601.2,386.0 L603.5,395.3 L605.5,404.7 L607.2,414.2 L608.5,423.7 L609.5,433.2 L610.1,442.8 L610.5,452.4 L610.4,462.0 L610.1,471.6 L609.3,481.1 L608.3,490.7 L606.9,500.2 L605.2,509.6 L603.1,519.0 L600.7,528.3 L598.0,537.6 L594.9,546.7 L591.6,555.7 L587.9,564.6 L583.8,573.4 L579.5,582.0 L574.9,590.5 L569.9,598.8 L564.7,606.9 L559.1,614.8 L553.3,622.6 L547.2,630.1 L540.8,637.4 L534.2,644.5 L527.3,651.4 L520.2,658.0 L512.8,664.4 L505.2,670.5 L497.4,676.4 L489.4,682.0 L481.2,687.3 L472.8,692.3 L464.2,697.0 L455.4,701.4 L446.5,705.5 L437.4,709.3 L428.2,712.8 L418.9,716.0 L409.5,718.8 L399.9,721.3 L390.3,723.5 L380.6,725.4 L370.9,726.9 L361.1,728.0 L351.2,728.8 L341.3,729.3 L331.5,729.5 L321.6,729.3 L311.7,728.7 L301.9,727.8 L292.1,726.6 L282.3,725.1 L272.6,723.2 L263.0,720.9 L253.5,718.4 L244.0,715.5 L234.7,712.2 L225.5,708.7 L216.4,704.8 L207.5,700.7 L198.8,696.2 L190.2,691.4 L181.7,686.4 L173.5,681.0 L165.5,675.4 L157.7,669.5 L150.1,663.3 L142.7,656.9 L135.6,650.2 L128.7,643.3 L122.1,636.2 L115.7,628.8 L109.6,621.2 L103.8,613.5 L98.3,605.5 L93.0,597.3 L88.1,589.0 L83.4,580.5 L79.1,571.9 L75.1,563.1 L71.4,554.1 L68.0,545.1 L64.9,536.0 L62.2,526.7 L59.8,517.4 L57.7,508.0 L56.0,498.5 L54.6,489.0 L53.6,479.5 L52.9,469.9 L52.5,460.3 L52.5,450.7 L52.8,441.1 L53.4,431.6 L54.4,422.0 L55.7,412.5 L57.4,403.1 L59.4,393.7 L61.7,384.4 L64.3,375.2 L67.3,366.1 L70.6,357.1 L74.2,348.2 L78.1,339.5 L82.3,330.9 L86.8,322.4 L91.6,314.1 L96.6,306.0 L102.0,298.1 L107.6,290.3 L113.5,282.8 L119.7,275.5 L126.1,268.3 L132.7,261.5 L139.6,254.8 L146.7,248.4 L154.1,242.2 L161.6,236.3 L169.3,230.6 L177.3,225.2 L185.4,220.1 L193.7,215.3 L202.1,210.8 L210.7,206.5 L219.4,202.6 L228.3,198.9 L237.3,195.6 L246.4,192.5 L255.6,189.8 L264.9,187.4 L274.3,185.3 L283.7,183.6 L293.2,182.1 L302.7,181.0 L312.3,180.2 L321.9,179.8Z"/>
<path d="M331.5,133.8 L342.6,134.0 L353.8,134.6 L364.9,135.6 L376.0,137.0 L387.1,138.7 L398.1,140.8 L409.0,143.3 L419.8,146.2 L430.5,149.4 L441.1,153.0 L451.5,157.0 L461.9,161.3 L472.0,165.9 L482.1,170.9 L491.9,176.3 L501.5,181.9 L511.0,187.9 L520.2,194.3 L529.3,200.9 L538.0,207.8 L546.6,215.0 L554.9,222.6 L562.9,230.4 L570.7,238.4 L578.1,246.8 L585.3,255.4 L592.2,264.2 L598.8,273.2 L605.1,282.5 L611.0,292.0 L616.6,301.7 L621.9,311.6 L626.8,321.6 L631.4,331.8 L635.6,342.2 L639.4,352.7 L642.9,363.3 L646.0,374.1 L648.7,384.9 L651.1,395.9 L653.0,406.9 L654.6,418.0 L655.8,429.1 L656.6,440.3 L656.9,451.4 L656.9,462.6 L656.5,473.8 L655.7,485.0 L654.5,496.1 L652.9,507.2 L651.0,518.3 L648.6,529.2 L645.8,540.1 L642.7,550.9 L639.1,561.5 L635.2,572.1 L630.9,582.4 L626.2,592.7 L621.2,602.8 L615.8,612.7 L610.0,622.4 L603.9,631.9 L597.5,641.1 L590.7,650.2 L583.6,659.0 L576.1,667.6 L568.4,675.9 L560.4,683.9 L552.1,691.7 L543.5,699.2 L534.6,706.3 L525.5,713.2 L516.1,719.7 L506.5,725.9 L496.7,731.8 L486.6,737.3 L476.4,742.5 L466.0,747.3 L455.4,751.7 L444.6,755.8 L433.7,759.5 L422.7,762.8 L411.5,765.8 L400.3,768.3 L389.0,770.5 L377.5,772.2 L366.1,773.6 L354.6,774.6 L343.0,775.1 L331.5,775.3 L319.9,775.1 L308.4,774.4 L296.8,773.4 L285.4,772.0 L274.0,770.1 L262.6,767.9 L251.4,765.3 L240.2,762.3 L229.2,758.9 L218.3,755.1 L207.6,751.0 L197.0,746.5 L186.5,741.6 L176.3,736.4 L166.3,730.8 L156.4,724.8 L146.8,718.6 L137.4,712.0 L128.3,705.1 L119.5,697.9 L110.9,690.4 L102.5,682.6 L94.5,674.5 L86.8,666.1 L79.3,657.5 L72.2,648.6 L65.5,639.6 L59.0,630.2 L52.9,620.7 L47.2,610.9 L41.8,601.0 L36.7,590.9 L32.0,580.6 L27.7,570.2 L23.8,559.7 L20.3,549.0 L17.1,538.2 L14.3,527.3 L12.0,516.3 L10.0,505.3 L8.4,494.2 L7.2,483.0 L6.4,471.9 L6.0,460.7 L6.0,449.5 L6.4,438.3 L7.2,427.1 L8.3,416.0 L9.9,405.0 L11.9,393.9 L14.2,383.0 L16.9,372.2 L20.0,361.5 L23.5,350.8 L27.4,340.4 L31.6,330.0 L36.1,319.8 L41.1,309.8 L46.3,300.0 L51.9,290.3 L57.9,280.9 L64.1,271.6 L70.7,262.6 L77.6,253.8 L84.8,245.3 L92.2,237.0 L100.0,229.0 L108.0,221.2 L116.3,213.8 L124.9,206.6 L133.7,199.7 L142.7,193.1 L151.9,186.9 L161.4,180.9 L171.0,175.3 L180.9,170.0 L190.9,165.1 L201.1,160.5 L211.4,156.2 L221.8,152.4 L232.4,148.8 L243.2,145.7 L254.0,142.9 L264.9,140.4 L275.8,138.4 L286.9,136.7 L298.0,135.4 L309.1,134.5 L320.3,134.0Z"/>
<path d="M331.5,88.0 L344.2,88.2 L356.9,88.9 L369.6,90.1 L382.3,91.6 L394.9,93.6 L407.4,96.0 L419.8,98.8 L432.2,102.1 L444.4,105.8 L456.5,109.9 L468.4,114.4 L480.2,119.3 L491.8,124.6 L503.2,130.3 L514.4,136.4 L525.5,142.8 L536.2,149.6 L546.8,156.8 L557.1,164.4 L567.1,172.3 L576.9,180.5 L586.4,189.1 L595.5,198.0 L604.4,207.2 L613.0,216.7 L621.2,226.5 L629.1,236.6 L636.6,246.9 L643.7,257.5 L650.5,268.3 L657.0,279.3 L663.0,290.6 L668.6,302.1 L673.9,313.7 L678.7,325.6 L683.1,337.6 L687.1,349.7 L690.7,362.0 L693.9,374.4 L696.6,386.8 L698.8,399.4 L700.6,412.1 L702.0,424.8 L703.0,437.5 L703.4,450.3 L703.5,463.1 L703.0,475.9 L702.1,488.7 L700.8,501.4 L699.0,514.1 L696.8,526.7 L694.1,539.2 L690.9,551.7 L687.4,564.0 L683.3,576.2 L678.9,588.3 L674.0,600.1 L668.7,611.9 L662.9,623.4 L656.8,634.7 L650.2,645.8 L643.3,656.7 L635.9,667.3 L628.2,677.7 L620.0,687.8 L611.6,697.6 L602.7,707.2 L593.6,716.4 L584.0,725.3 L574.2,733.8 L564.1,742.0 L553.6,749.9 L542.9,757.4 L531.9,764.5 L520.7,771.2 L509.2,777.5 L497.5,783.5 L485.5,789.0 L473.4,794.1 L461.1,798.7 L448.6,803.0 L436.0,806.8 L423.2,810.2 L410.3,813.1 L397.3,815.6 L384.3,817.6 L371.1,819.2 L357.9,820.3 L344.7,820.9 L331.5,821.1 L318.2,820.8 L305.0,820.1 L291.8,818.9 L278.7,817.3 L265.6,815.2 L252.6,812.6 L239.7,809.6 L226.9,806.2 L214.3,802.3 L201.8,798.0 L189.5,793.2 L177.4,788.0 L165.5,782.5 L153.7,776.5 L142.2,770.1 L131.0,763.3 L120.0,756.1 L109.3,748.5 L98.8,740.6 L88.7,732.4 L78.9,723.7 L69.4,714.8 L60.2,705.5 L51.4,696.0 L42.9,686.1 L34.8,675.9 L27.0,665.5 L19.7,654.8 L12.7,643.9 L6.1,632.8 L-0.0,621.4 L-5.8,609.8 L-11.1,598.1 L-16.0,586.2 L-20.4,574.1 L-24.4,561.9 L-28.0,549.5 L-31.2,537.1 L-33.9,524.5 L-36.1,511.9 L-37.9,499.2 L-39.2,486.4 L-40.1,473.7 L-40.5,460.9 L-40.5,448.1 L-40.0,435.3 L-39.1,422.6 L-37.7,409.9 L-35.9,397.2 L-33.6,384.7 L-30.9,372.2 L-27.8,359.8 L-24.2,347.6 L-20.2,335.4 L-15.8,323.5 L-11.0,311.7 L-5.7,300.1 L-0.1,288.6 L5.9,277.4 L12.4,266.4 L19.2,255.6 L26.3,245.1 L33.9,234.8 L41.7,224.8 L50.0,215.0 L58.5,205.6 L67.4,196.4 L76.6,187.6 L86.0,179.1 L95.8,170.9 L105.8,163.0 L116.1,155.6 L126.7,148.4 L137.5,141.6 L148.5,135.3 L159.7,129.2 L171.1,123.6 L182.7,118.4 L194.5,113.5 L206.5,109.1 L218.5,105.1 L230.8,101.5 L243.1,98.3 L255.5,95.5 L268.0,93.2 L280.6,91.3 L293.3,89.8 L306.0,88.8 L318.7,88.2Z"/>
<path d="M331.5,42.2 L345.8,42.5 L360.0,43.2 L374.3,44.5 L388.5,46.2 L402.6,48.4 L416.7,51.2 L430.7,54.3 L444.5,58.0 L458.2,62.1 L471.8,66.7 L485.2,71.7 L498.4,77.2 L511.5,83.2 L524.3,89.6 L536.9,96.4 L549.3,103.6 L561.4,111.3 L573.3,119.4 L584.8,127.9 L596.1,136.7 L607.1,146.0 L617.7,155.6 L628.1,165.6 L638.0,175.9 L647.7,186.6 L656.9,197.5 L665.8,208.8 L674.3,220.4 L682.3,232.3 L690.0,244.5 L697.2,256.9 L704.1,269.5 L710.4,282.4 L716.3,295.5 L721.8,308.8 L726.8,322.3 L731.3,335.9 L735.4,349.7 L738.9,363.6 L742.0,377.7 L744.6,391.8 L746.7,406.0 L748.3,420.3 L749.3,434.7 L749.9,449.0 L750.0,463.4 L749.5,477.8 L748.6,492.2 L747.1,506.5 L745.1,520.8 L742.6,535.0 L739.6,549.1 L736.1,563.1 L732.1,577.0 L727.7,590.7 L722.7,604.3 L717.2,617.7 L711.2,630.9 L704.8,643.9 L697.9,656.7 L690.5,669.2 L682.7,681.4 L674.4,693.4 L665.8,705.1 L656.6,716.5 L647.1,727.6 L637.2,738.3 L626.9,748.7 L616.2,758.7 L605.1,768.4 L593.7,777.6 L581.9,786.5 L569.8,795.0 L557.5,803.0 L544.8,810.6 L531.8,817.7 L518.6,824.4 L505.2,830.6 L491.5,836.4 L477.6,841.7 L463.6,846.5 L449.3,850.8 L434.9,854.6 L420.4,857.9 L405.8,860.7 L391.0,863.0 L376.2,864.7 L361.3,866.0 L346.4,866.7 L331.5,866.9 L316.5,866.6 L301.6,865.8 L286.7,864.5 L271.9,862.6 L257.2,860.2 L242.5,857.4 L228.0,854.0 L213.6,850.1 L199.3,845.7 L185.3,840.8 L171.4,835.4 L157.7,829.6 L144.3,823.3 L131.1,816.5 L118.1,809.3 L105.5,801.6 L93.1,793.5 L81.0,785.0 L69.2,776.1 L57.8,766.7 L46.8,757.0 L36.1,746.9 L25.7,736.5 L15.8,725.7 L6.3,714.6 L-2.8,703.1 L-11.5,691.4 L-19.8,679.3 L-27.6,667.0 L-35.0,654.5 L-41.9,641.7 L-48.3,628.6 L-54.3,615.4 L-59.7,602.0 L-64.7,588.3 L-69.2,574.6 L-73.2,560.7 L-76.7,546.7 L-79.7,532.5 L-82.2,518.3 L-84.2,504.0 L-85.7,489.7 L-86.6,475.3 L-87.1,460.9 L-87.0,446.5 L-86.4,432.2 L-85.3,417.8 L-83.8,403.5 L-81.7,389.3 L-79.1,375.2 L-76.0,361.2 L-72.5,347.3 L-68.4,333.5 L-63.9,319.9 L-58.9,306.4 L-53.4,293.2 L-47.5,280.1 L-41.1,267.3 L-34.3,254.7 L-27.1,242.3 L-19.4,230.2 L-11.3,218.4 L-2.9,206.8 L6.0,195.6 L15.3,184.7 L24.9,174.1 L34.8,163.8 L45.2,153.9 L55.8,144.3 L66.8,135.1 L78.1,126.3 L89.7,117.9 L101.5,109.9 L113.6,102.3 L126.0,95.2 L138.6,88.4 L151.5,82.1 L164.5,76.2 L177.7,70.8 L191.1,65.9 L204.7,61.3 L218.4,57.3 L232.3,53.7 L246.2,50.6 L260.3,48.0 L274.4,45.9 L288.6,44.2 L302.9,43.1 L317.2,42.4Z"/>
<path d="M331.5,-3.7 L347.3,-3.3 L363.1,-2.5 L378.9,-1.1 L394.7,0.8 L410.4,3.3 L426.0,6.3 L441.4,9.8 L456.8,13.9 L472.0,18.4 L487.0,23.5 L501.9,29.1 L516.6,35.2 L531.1,41.8 L545.3,48.9 L559.3,56.4 L573.0,64.4 L586.5,72.9 L599.6,81.9 L612.5,91.3 L625.0,101.1 L637.2,111.3 L649.0,122.0 L660.5,133.1 L671.6,144.5 L682.3,156.3 L692.6,168.5 L702.4,181.0 L711.9,193.9 L720.8,207.0 L729.4,220.5 L737.4,234.3 L745.0,248.3 L752.1,262.6 L758.7,277.1 L764.8,291.9 L770.4,306.8 L775.4,322.0 L780.0,337.3 L784.0,352.7 L787.4,368.3 L790.3,384.0 L792.7,399.8 L794.5,415.7 L795.7,431.6 L796.4,447.6 L796.5,463.6 L796.0,479.6 L795.0,495.5 L793.4,511.5 L791.3,527.3 L788.5,543.1 L785.3,558.8 L781.4,574.4 L777.0,589.8 L772.0,605.1 L766.5,620.2 L760.5,635.1 L753.9,649.8 L746.7,664.3 L739.1,678.5 L730.9,692.4 L722.3,706.1 L713.1,719.4 L703.5,732.4 L693.3,745.1 L682.8,757.4 L671.7,769.4 L660.3,781.0 L648.4,792.1 L636.1,802.9 L623.4,813.2 L610.3,823.1 L596.9,832.5 L583.1,841.4 L569.0,849.9 L554.6,857.9 L539.9,865.3 L525.0,872.3 L509.7,878.7 L494.3,884.6 L478.6,889.9 L462.7,894.7 L446.7,899.0 L430.5,902.7 L414.2,905.8 L397.8,908.3 L381.3,910.3 L364.7,911.7 L348.1,912.5 L331.5,912.8 L314.8,912.4 L298.2,911.5 L281.6,910.0 L265.1,907.9 L248.7,905.3 L232.4,902.1 L216.2,898.3 L200.2,893.9 L184.3,889.1 L168.6,883.6 L153.2,877.6 L138.0,871.1 L123.0,864.1 L108.3,856.5 L93.9,848.5 L79.8,839.9 L66.0,830.9 L52.6,821.4 L39.5,811.5 L26.8,801.1 L14.5,790.2 L2.7,779.0 L-8.8,767.4 L-19.8,755.3 L-30.4,742.9 L-40.5,730.2 L-50.2,717.1 L-59.4,703.7 L-68.0,690.0 L-76.2,676.0 L-83.8,661.8 L-90.9,647.3 L-97.5,632.5 L-103.6,617.6 L-109.1,602.5 L-114.1,587.1 L-118.5,571.7 L-122.3,556.1 L-125.6,540.4 L-128.3,524.6 L-130.5,508.7 L-132.1,492.8 L-133.1,476.8 L-133.6,460.8 L-133.5,444.8 L-132.8,428.8 L-131.6,412.9 L-129.8,397.1 L-127.4,381.3 L-124.5,365.6 L-121.1,350.0 L-117.1,334.6 L-112.5,319.3 L-107.5,304.2 L-101.9,289.3 L-95.8,274.6 L-89.2,260.1 L-82.1,245.8 L-74.5,231.8 L-66.4,218.1 L-57.9,204.7 L-48.9,191.6 L-39.5,178.8 L-29.6,166.3 L-19.4,154.2 L-8.7,142.5 L2.4,131.1 L13.9,120.1 L25.7,109.5 L37.9,99.3 L50.4,89.6 L63.3,80.3 L76.5,71.4 L89.9,63.0 L103.6,55.0 L117.6,47.6 L131.9,40.6 L146.3,34.1 L161.0,28.1 L175.9,22.6 L190.9,17.6 L206.1,13.1 L221.5,9.2 L237.0,5.7 L252.5,2.8 L268.2,0.5 L284.0,-1.4 L299.8,-2.7 L315.6,-3.4Z"/>
<path d="M331.5,-49.5 L348.9,-49.1 L366.2,-48.2 L383.6,-46.7 L400.9,-44.5 L418.1,-41.8 L435.2,-38.6 L452.2,-34.7 L469.0,-30.3 L485.7,-25.3 L502.2,-19.7 L518.6,-13.6 L534.7,-6.9 L550.6,0.3 L566.2,8.1 L581.6,16.4 L596.6,25.2 L611.4,34.5 L625.9,44.3 L640.0,54.6 L653.8,65.4 L667.2,76.6 L680.2,88.3 L692.8,100.5 L705.0,113.0 L716.8,126.0 L728.1,139.4 L739.0,153.1 L749.3,167.2 L759.2,181.7 L768.6,196.5 L777.5,211.6 L785.9,227.0 L793.7,242.7 L801.0,258.6 L807.7,274.8 L813.9,291.3 L819.5,307.9 L824.5,324.7 L829.0,341.7 L832.8,358.8 L836.0,376.1 L838.7,393.5 L840.7,410.9 L842.1,428.4 L842.9,446.0 L843.0,463.6 L842.6,481.2 L841.5,498.7 L839.8,516.2 L837.4,533.7 L834.5,551.1 L830.9,568.4 L826.7,585.5 L821.9,602.5 L816.5,619.3 L810.4,635.9 L803.8,652.4 L796.6,668.6 L788.8,684.5 L780.4,700.1 L771.5,715.5 L761.9,730.5 L751.9,745.3 L741.3,759.6 L730.2,773.6 L718.5,787.2 L706.4,800.4 L693.8,813.1 L680.7,825.5 L667.2,837.3 L653.2,848.7 L638.8,859.6 L624.1,870.0 L608.9,879.9 L593.4,889.2 L577.5,898.0 L561.3,906.2 L544.8,913.9 L528.0,921.0 L511.0,927.5 L493.7,933.4 L476.2,938.7 L458.6,943.4 L440.7,947.4 L422.7,950.9 L404.6,953.7 L386.4,955.9 L368.1,957.4 L349.8,958.3 L331.5,958.6 L313.1,958.2 L294.8,957.2 L276.5,955.5 L258.3,953.2 L240.2,950.3 L222.2,946.8 L204.4,942.6 L186.7,937.8 L169.2,932.4 L151.9,926.4 L134.9,919.8 L118.1,912.6 L101.6,904.8 L85.4,896.5 L69.6,887.6 L54.0,878.2 L38.9,868.2 L24.1,857.8 L9.7,846.8 L-4.3,835.3 L-17.8,823.4 L-30.9,811.0 L-43.5,798.1 L-55.6,784.9 L-67.2,771.2 L-78.4,757.2 L-89.0,742.7 L-99.0,728.0 L-108.5,712.9 L-117.5,697.4 L-125.9,681.7 L-133.7,665.8 L-140.9,649.5 L-147.5,633.1 L-153.6,616.4 L-159.0,599.5 L-163.8,582.5 L-168.0,565.4 L-171.6,548.1 L-174.5,530.7 L-176.9,513.2 L-178.6,495.7 L-179.6,478.1 L-180.1,460.5 L-179.9,442.9 L-179.2,425.4 L-177.8,407.8 L-175.7,390.4 L-173.1,373.1 L-169.9,355.8 L-166.0,338.7 L-161.6,321.7 L-156.6,305.0 L-151.0,288.4 L-144.8,272.0 L-138.1,255.8 L-130.8,239.9 L-123.0,224.3 L-114.6,208.9 L-105.7,193.8 L-96.3,179.1 L-86.4,164.7 L-76.0,150.7 L-65.2,137.0 L-53.9,123.7 L-42.1,110.8 L-29.9,98.3 L-17.3,86.2 L-4.3,74.6 L9.1,63.5 L22.9,52.8 L37.0,42.6 L51.5,32.8 L66.3,23.6 L81.4,14.9 L96.7,6.7 L112.4,-1.0 L128.2,-8.1 L144.4,-14.7 L160.7,-20.7 L177.2,-26.2 L193.9,-31.1 L210.8,-35.4 L227.7,-39.2 L244.9,-42.4 L262.1,-45.0 L279.3,-47.0 L296.7,-48.4 L314.1,-49.2Z"/>
<path d="M331.5,454.5 L331.5,390.4 L331.5,326.3 L331.5,262.1 L331.5,198.0 L331.5,133.8 L331.5,69.7 L331.5,5.5 L331.5,-58.6 L331.5,-122.8 L331.5,-186.9 L331.5,-251.1 L331.5,-315.2"/>
<path d="M331.5,454.5 L363.9,399.1 L396.2,343.5 L428.3,287.8 L460.2,232.1 L491.9,176.3 L523.4,120.4 L554.8,64.4 L586.0,8.4 L617.0,-47.7 L647.9,-103.9 L678.6,-160.2 L709.2,-216.5"/>
<path d="M331.5,454.5 L387.7,422.5 L443.8,390.3 L499.7,357.7 L555.5,325.0 L611.0,292.0 L666.3,258.8 L721.5,225.3 L776.5,191.6 L831.3,157.7 L885.9,123.6 L940.3,89.2 L994.6,54.6"/>
<path d="M331.5,454.5 L396.6,454.6 L461.7,454.3 L526.8,453.7 L591.9,452.7 L656.9,451.4 L722.0,449.8 L787.1,447.9 L852.2,445.6 L917.2,443.1 L982.2,440.1 L1047.3,436.9 L1112.3,433.3"/>
<path d="M331.5,454.5 L387.9,486.7 L444.6,518.5 L501.5,550.2 L558.5,581.5 L615.8,612.7 L673.2,643.5 L730.8,674.1 L788.7,704.5 L846.7,734.5 L904.9,764.3 L963.4,793.9 L1022.0,823.1"/>
<path d="M331.5,454.5 L364.1,510.2 L396.9,565.7 L430.0,621.1 L463.2,676.5 L496.7,731.8 L530.3,786.9 L564.2,842.0 L598.2,897.0 L632.5,952.0 L667.0,1006.8 L701.8,1061.5 L736.7,1116.1"/>
<path d="M331.5,454.5 L331.5,518.7 L331.5,582.8 L331.5,647.0 L331.5,711.1 L331.5,775.3 L331.5,839.4 L331.5,903.6 L331.5,967.7 L331.5,1031.9 L331.5,1096.0 L331.5,1160.2 L331.5,1224.3"/>
<path d="M331.5,454.5 L298.8,510.0 L266.0,565.3 L232.9,620.5 L199.7,675.7 L166.3,730.8 L132.6,785.8 L98.8,840.6 L64.7,895.4 L30.4,950.1 L-4.1,1004.8 L-38.8,1059.3 L-73.8,1113.7"/>
<path d="M331.5,454.5 L275.0,486.3 L218.3,517.9 L161.5,549.1 L104.4,580.2 L47.2,610.9 L-10.3,641.5 L-67.9,671.7 L-125.8,701.7 L-183.8,731.4 L-242.0,760.9 L-300.5,790.1 L-359.1,819.0"/>
<path d="M331.5,454.5 L266.4,454.2 L201.3,453.5 L136.2,452.5 L71.1,451.2 L6.0,449.5 L-59.1,447.5 L-124.2,445.2 L-189.2,442.5 L-254.3,439.5 L-319.3,436.2 L-384.3,432.6 L-449.3,428.7"/>
<path d="M331.5,454.5 L275.2,422.2 L219.1,389.6 L163.2,356.7 L107.5,323.6 L51.9,290.3 L-3.4,256.8 L-58.6,223.0 L-113.6,189.0 L-168.3,154.7 L-223.0,120.3 L-277.4,85.6 L-331.6,50.7"/>
<path d="M331.5,454.5 L299.0,398.9 L266.7,343.1 L234.7,287.2 L202.7,231.3 L171.0,175.3 L139.5,119.2 L108.1,63.1 L76.9,6.8 L45.9,-49.4 L15.0,-105.8 L-15.7,-162.2 L-46.2,-218.8"/>
</g>
<g fill="#bebebe" font-family="Liberation Mono" text-anchor="middle">
<text x="362.1" y="424.8" font-size="11.67" transform="translate(0,424.8) scale(1,1.15) translate(0,-424.8)">25 km</text>
<text x="392.8" y="390.6" font-size="11.67" transform="translate(0,390.6) scale(1,1.15) translate(0,-390.6)">50 km</text>
<text x="423.5" y="356.4" font-size="11.67" transform="translate(0,356.4) scale(1,1.15) translate(0,-356.4)">75 km</text>
<text x="454.1" y="321.1" font-size="10">100 km</text>
<text x="484.8" y="286.9" font-size="10">125 km</text>
<text x="515.5" y="252.7" font-size="10">150 km</text>
<text x="546.1" y="218.5" font-size="10">175 km</text>
<text x="576.8" y="184.2" font-size="10">200 km</text>
<text x="607.5" y="150.0" font-size="10">225 km</text>
</g>
<rect x="21.5" y="142.5" width="636" height="636" fill="none" stroke="#fff" stroke-width="1" shape-rendering="crispEdges"/>
<text x="32" y="156" fill="#fff" stroke="#fff" stroke-width="0.25" font-family="Liberation Mono" font-weight="bold" font-size="11.67" transform="translate(0,156) scale(1,1.17) translate(0,-156)">CSU QC2 CONVSF: 12/14/2018 01:50:43</text>
<g fill="#fff" stroke="#fff" stroke-width="0.25" font-family="Liberation Mono" font-weight="bold" font-size="11.67" text-anchor="middle">
<rect x="96" y="135" width="1" height="8" shape-rendering="crispEdges"/>
<text x="97.0" y="132" transform="translate(0,132) scale(1,1.17) translate(0,-132)">65.5W</text>
<rect x="185" y="135" width="1" height="8" shape-rendering="crispEdges"/>
<text x="186.0" y="132" transform="translate(0,132) scale(1,1.17) translate(0,-132)">65.0W</text>
<rect x="273" y="135" width="1" height="8" shape-rendering="crispEdges"/>
<text x="274.0" y="132" transform="translate(0,132) scale(1,1.17) translate(0,-132)">64.5W</text>
<rect x="361" y="135" width="1" height="8" shape-rendering="crispEdges"/>
<text x="362.0" y="132" transform="translate(0,132) scale(1,1.17) translate(0,-132)">64.0W</text>
<rect x="449" y="135" width="1" height="8" shape-rendering="crispEdges"/>
<text x="450.0" y="132" transform="translate(0,132) scale(1,1.17) translate(0,-132)">63.5W</text>
<rect x="537" y="135" width="1" height="8" shape-rendering="crispEdges"/>
<text x="538.0" y="132" transform="translate(0,132) scale(1,1.17) translate(0,-132)">63.0W</text>
<rect x="625" y="135" width="1" height="8" shape-rendering="crispEdges"/>
<text x="626.0" y="132" transform="translate(0,132) scale(1,1.17) translate(0,-132)">62.5W</text>
</g>
<g fill="#fff" font-family="Liberation Mono" font-size="10">
<text x="1.5" y="120" font-size="9.5" textLength="17">deg</text>
<rect x="18" y="223" width="4" height="1" shape-rendering="crispEdges"/>
<text x="0.5" y="226.5">-30.5</text>
<rect x="18" y="325" width="4" height="1" shape-rendering="crispEdges"/>
<text x="0.5" y="328.5">-31.0</text>
<rect x="18" y="427" width="4" height="1" shape-rendering="crispEdges"/>
<text x="0.5" y="430.5">-31.5</text>
<rect x="18" y="529" width="4" height="1" shape-rendering="crispEdges"/>
<text x="0.5" y="532.5">-32.0</text>
<rect x="18" y="631" width="4" height="1" shape-rendering="crispEdges"/>
<text x="0.5" y="634.5">-32.5</text>
<rect x="18" y="732" width="4" height="1" shape-rendering="crispEdges"/>
<text x="0.5" y="735.5">-33.0</text>
</g>
<g shape-rendering="crispEdges">
<rect x="659" y="353" width="28" height="142" fill="#00ffff"/>
<rect x="659" y="495" width="28" height="142" fill="#0080ff"/>
<rect x="687" y="142" width="1" height="637" fill="#ffb6c1"/>
<rect x="717" y="142" width="1" height="656" fill="#ffb6c1"/>
<rect x="687" y="142" width="31" height="1" fill="#ffb6c1"/>
<rect x="659" y="420" width="23" height="10" fill="#000"/>
<rect x="659" y="562" width="29" height="10" fill="#000"/>
<rect x="671" y="147" width="4" height="1" fill="#fff"/>
</g>
<g font-family="Liberation Mono" font-size="10"><text x="659.5" y="428" fill="#fff" textLength="22" lengthAdjust="spacingAndGlyphs">conv</text><text x="658.5" y="570" fill="#fff" textLength="29" lengthAdjust="spacingAndGlyphs">strat</text><text x="696.5" y="467" fill="#ffb6c1">2D</text></g>
<g shape-rendering="crispEdges" fill="#ffb6c1">
<rect x="321" y="780" width="28" height="20" fill="#808080"/>
<rect x="0" y="798" width="718" height="1"/>
<rect x="21" y="781" width="1" height="17"/>
<rect x="61" y="794" width="1" height="4"/>
<rect x="102" y="794" width="1" height="4"/>
<rect x="143" y="794" width="1" height="4"/>
<rect x="184" y="781" width="1" height="17"/>
<rect x="225" y="794" width="1" height="4"/>
<rect x="266" y="794" width="1" height="4"/>
<rect x="307" y="794" width="1" height="4"/>
<rect x="347" y="781" width="1" height="17"/>
<rect x="388" y="794" width="1" height="4"/>
<rect x="429" y="794" width="1" height="4"/>
<rect x="470" y="794" width="1" height="4"/>
<rect x="511" y="781" width="1" height="17"/>
<rect x="552" y="794" width="1" height="4"/>
<rect x="593" y="794" width="1" height="4"/>
<rect x="634" y="794" width="1" height="4"/>
<rect x="674" y="781" width="1" height="17"/>
<rect x="715" y="794" width="1" height="4"/>
</g>
<g fill="#ffb6c1" stroke="#ffb6c1" stroke-width="0.2" font-family="Liberation Mono" font-weight="bold" font-size="11.67">
<text x="-9.0" y="790.3" transform="translate(0,790.3) scale(1,1.17) translate(0,-790.3)">00Z 12/14</text>
<text x="178.3" y="792.0" transform="translate(0,792.0) scale(1,1.17) translate(0,-792.0)">01Z</text>
<text x="341.6" y="792.0" transform="translate(0,792.0) scale(1,1.17) translate(0,-792.0)">02Z</text>
<text x="504.9" y="792.0" transform="translate(0,792.0) scale(1,1.17) translate(0,-792.0)">03Z</text>
<text x="668.2" y="792.0" transform="translate(0,792.0) scale(1,1.17) translate(0,-792.0)">04Z</text>
</g>
</svg>
</body></html>
